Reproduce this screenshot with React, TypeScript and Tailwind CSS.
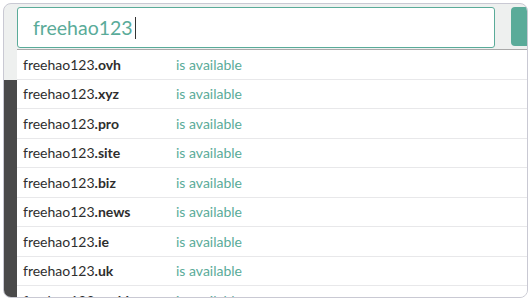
const domains = ["ovh", "xyz", "pro", "site", "biz", "news", "ie", "uk", "mobi"];

export default function App() {
  return (
    <div className="h-[300px] w-[530px] bg-white pl-[3px] pt-[3px] font-['Lato','Liberation_Sans',sans-serif]">
      <div className="flex h-[295px] w-[525px] flex-col overflow-hidden rounded-[8px] border border-[#c9c9d3] bg-[#eef0ef]">
        {/* search bar */}
        <div className="flex h-[45px] shrink-0 items-start gap-[16px] pl-[13px] pt-[3px]">
          <div className="flex h-[41px] w-[478px] items-center rounded-[3px] border border-[#5aab99] bg-white pl-[15px]">
            <span className="text-[19.5px] leading-none text-[#5aab99]">freehao123</span>
            <span className="ml-[2px] h-[22px] w-px bg-[#333]" />
          </div>
          <div className="h-[39px] flex-1 rounded-l-[4px] bg-[#5aab99]" />
        </div>

        <div className="flex flex-1">
          <div className="flex w-[13px] shrink-0 flex-col">
            <div className="h-[31px] bg-[#eef0ef]" />
            <div className="flex-1 bg-[#4a4a4a]" />
          </div>
          <div className="flex-1 overflow-hidden border-t border-[#a9a9a9] bg-white">
            {domains.map((d) => (
              <div
                key={d}
                className="flex h-[29.5px] items-center border-b border-[#e8e8ea] pl-[6px] text-[14px]"
              >
                <span className="w-[153px] text-[#2e2e2e]">
                  freehao123<span className="font-bold">.{d}</span>
                </span>
                <span className="text-[#5aab99]">is available</span>
              </div>
            ))}
          </div>
        </div>
      </div>
    </div>
  );
}
